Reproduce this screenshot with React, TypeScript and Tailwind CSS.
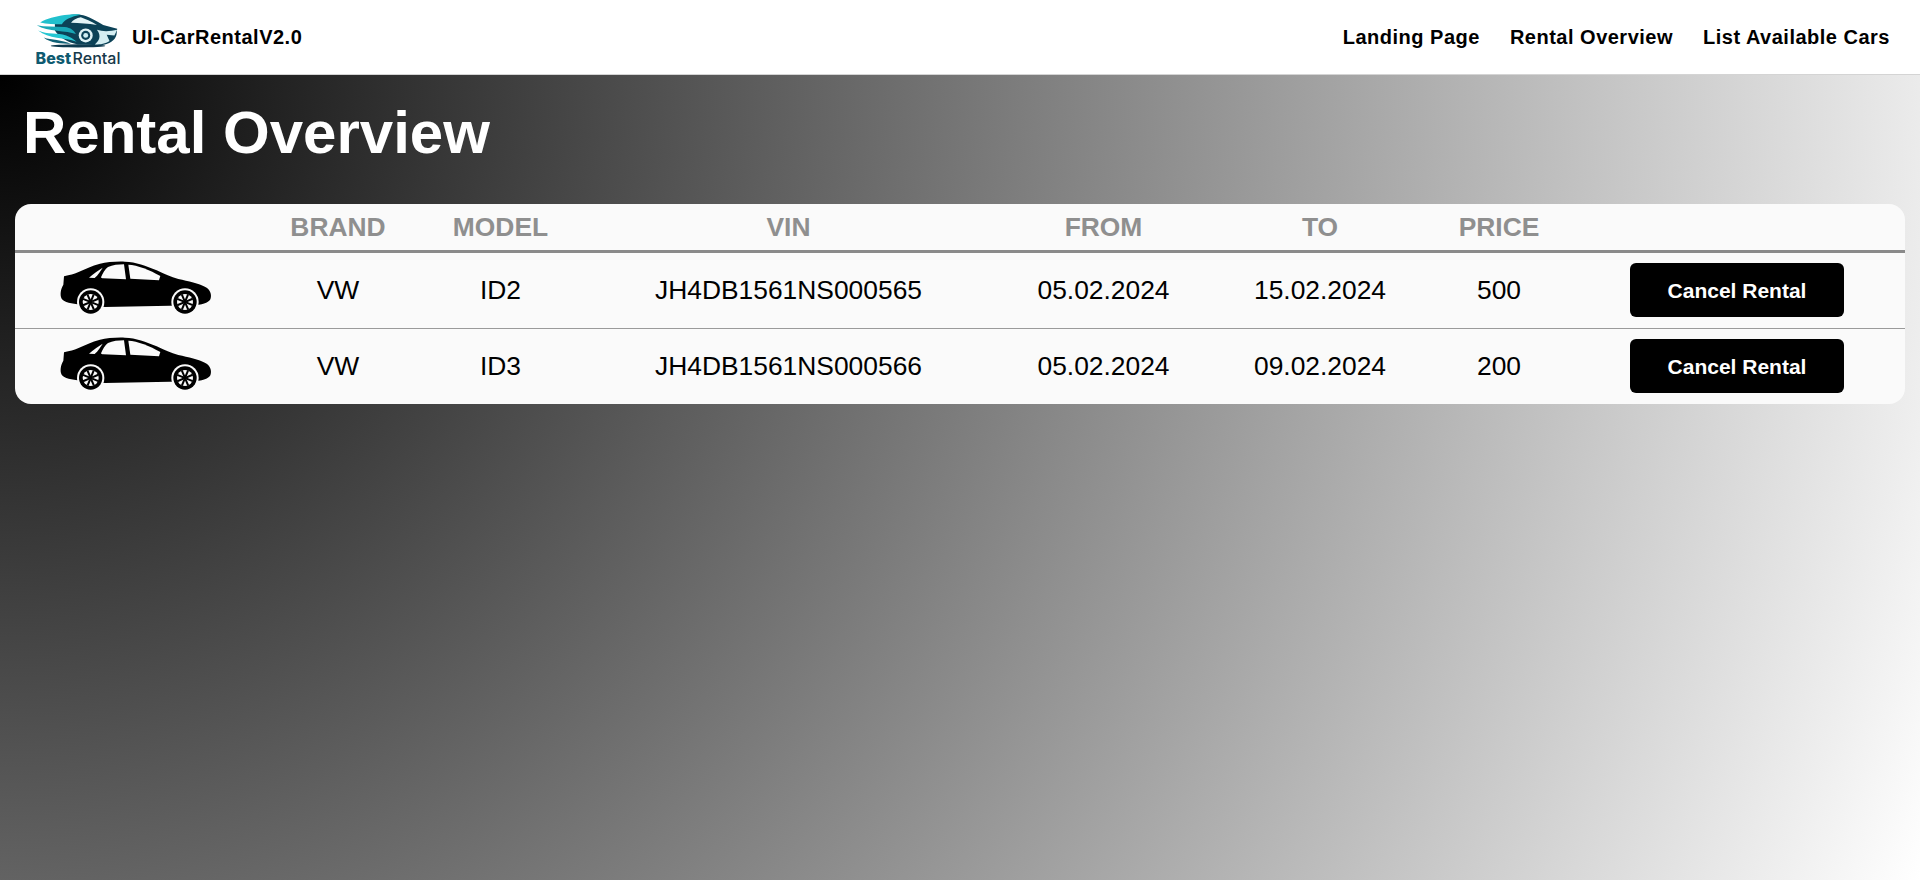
const rows = [
  { brand: "VW", model: "ID2", vin: "JH4DB1561NS000565", from: "05.02.2024", to: "15.02.2024", price: "500" },
  { brand: "VW", model: "ID3", vin: "JH4DB1561NS000566", from: "05.02.2024", to: "09.02.2024", price: "200" },
];

const cols = "grid grid-cols-[242px_162px_163px_413px_217px_216px_142px_1fr] items-center text-center";

function Wheel({ cx, cy }: { cx: number; cy: number }) {
  const spokes = [0, 45, 90, 135, 180, 225, 270, 315];
  return (
    <g>
      <circle cx={cx} cy={cy} r="41" fill="#fafafa" />
      <circle cx={cx} cy={cy} r="35" fill="#000" />
      <circle cx={cx} cy={cy} r="24" fill="#fafafa" />
      <circle cx={cx} cy={cy} r="6.5" fill="#000" />
      {spokes.map((a) => (
        <rect key={a} x={cx - 3} y={cy - 25} width="6" height="20" fill="#000" transform={`rotate(${a + 22} ${cx} ${cy})`} />
      ))}
    </g>
  );
}

function Car() {
  return (
    <svg width="170" height="80" viewBox="0 0 510 240" className="block shrink-0 -my-[3px] mr-[2px]">
      <path
        fill="#000"
        d="M42 76 C60 72 72 70 84 64 C105 55 125 44 150 38 C170 33 200 31 225 32 C258 33 288 44 320 58 C345 70 362 78 385 84 C415 91 447 97 466 108 C481 116 485 130 482 142 C479 154 464 159 437 163 L165 168 L92 161 C65 157 42 154 35 143 C29 132 32 114 40 101 Z"
      />
      <path fill="#fafafa" d="M117 80 C128 70 142 60 158 50 C152 60 144 72 134 81 Z" />
      <path fill="#fafafa" d="M153 79 C158 66 166 54 174 48 C188 42 205 40 222 40 L228 85 L160 82 C156 82 154 81 153 79 Z" />
      <path fill="#fafafa" d="M235 41 C262 42 300 57 331 75 L327 88 L241 83 Z" />
      <Wheel cx={122} cy={153} />
      <Wheel cx={405} cy={153} />
    </svg>
  );
}

function Logo() {
  return (
    <div className="flex flex-col items-center w-[84px] shrink-0 pt-[5px]">
      <svg width="84" height="35" viewBox="30 10 240 100" className="block">
        <ellipse cx="150" cy="104" rx="78" ry="4.5" fill="#0e3a4e" />
        <path fill="#0c4257" d="M84 32 C106 18 134 13 156 15 C180 18 204 34 222 44 L262 55 L260 72 C256 88 240 100 215 102 L150 100 C120 94 96 80 84 60 Z" />
        <path fill="#21c0cd" d="M42 37 C60 26 86 20 112 16 C130 14 148 13 158 15 C130 20 110 30 104 42 C84 42 60 42 42 37 Z" />
        <path fill="#e4f5f7" d="M130 38 C136 30 146 23 158 22 C172 28 186 32 204 44 C180 41 154 38 130 38 Z" />
        <path fill="#19a7b6" d="M32 45 C56 50 84 48 112 50 C130 52 138 60 144 70 C118 60 64 64 32 45 Z" />
        <path fill="#25c6d2" d="M36 60 C62 72 92 66 116 74 C128 78 136 84 146 92 C112 80 66 84 36 60 Z" />
        <path fill="#116176" d="M52 80 C74 88 104 86 130 98 C104 98 70 96 52 80 Z" />
        <circle cx="172" cy="74" r="20" fill="#dff2f5" />
        <circle cx="172" cy="74" r="13" fill="#0c4257" />
        <circle cx="172" cy="74" r="7" fill="#cfeef2" />
        <path fill="#d4eef2" d="M204 58 C222 64 244 62 262 58 L254 74 L232 72 L240 90 C228 98 216 100 198 100 C210 90 218 76 204 58 Z" />
      </svg>
      <div className="text-[16px] leading-[17px] mt-[2px] whitespace-nowrap font-['Inter',sans-serif]">
        <span className="font-extrabold text-[#0f5a70] mr-[1.5px]">Best</span>
        <span className="font-medium text-[#17394a]">Rental</span>
      </div>
    </div>
  );
}

export default function App() {
  return (
    <div className="min-h-[880px] flex flex-col font-['Liberation_Sans',Arial,sans-serif]">
      <header className="h-[75px] bg-white border-b border-[#d4d4d4] flex items-center justify-between pl-9 pr-[30px]">
        <div className="flex items-center gap-3">
          <Logo />
          <span className="text-[20px] tracking-[0.5px] font-bold text-black">UI-CarRentalV2.0</span>
        </div>
        <nav className="flex items-center gap-[30px] text-[20px] tracking-[0.5px] font-bold text-black">
          <span>Landing Page</span>
          <span>Rental Overview</span>
          <span>List Available Cars</span>
        </nav>
      </header>
      <main className="flex-1 bg-[radial-gradient(circle_at_top_left,#000,#fff)] px-[15px]">
        <h1 className="text-[60px] leading-[69px] font-bold text-white pl-2 pt-[23px] pb-[37px]">Rental Overview</h1>
        <div className="bg-[#fafafa] rounded-2xl overflow-hidden">
          <div className={`${cols} h-[49px] pt-[2px] border-b-[3px] border-[#8a8a8a] text-[26.4px] font-bold text-[#8f8f8f]`}>
            <span />
            <span>BRAND</span>
            <span>MODEL</span>
            <span>VIN</span>
            <span>FROM</span>
            <span>TO</span>
            <span>PRICE</span>
            <span />
          </div>
          {rows.map((r, i) => (
            <div
              key={r.model}
              className={`${cols} pt-[1px] text-[26.4px] text-black ${i === 0 ? "h-[76px] border-b border-[#9a9a9a]" : "h-[75px]"}`}
            >
              <div className="flex justify-center"><Car /></div>
              <span>{r.brand}</span>
              <span>{r.model}</span>
              <span>{r.vin}</span>
              <span>{r.from}</span>
              <span>{r.to}</span>
              <span>{r.price}</span>
              <div className="flex justify-center pr-[1px]">
                <button className="w-[214px] h-[54px] -mt-[2px] pt-[2px] bg-black text-white rounded-md text-[21px] font-bold">Cancel Rental</button>
              </div>
            </div>
          ))}
        </div>
      </main>
    </div>
  );
}
